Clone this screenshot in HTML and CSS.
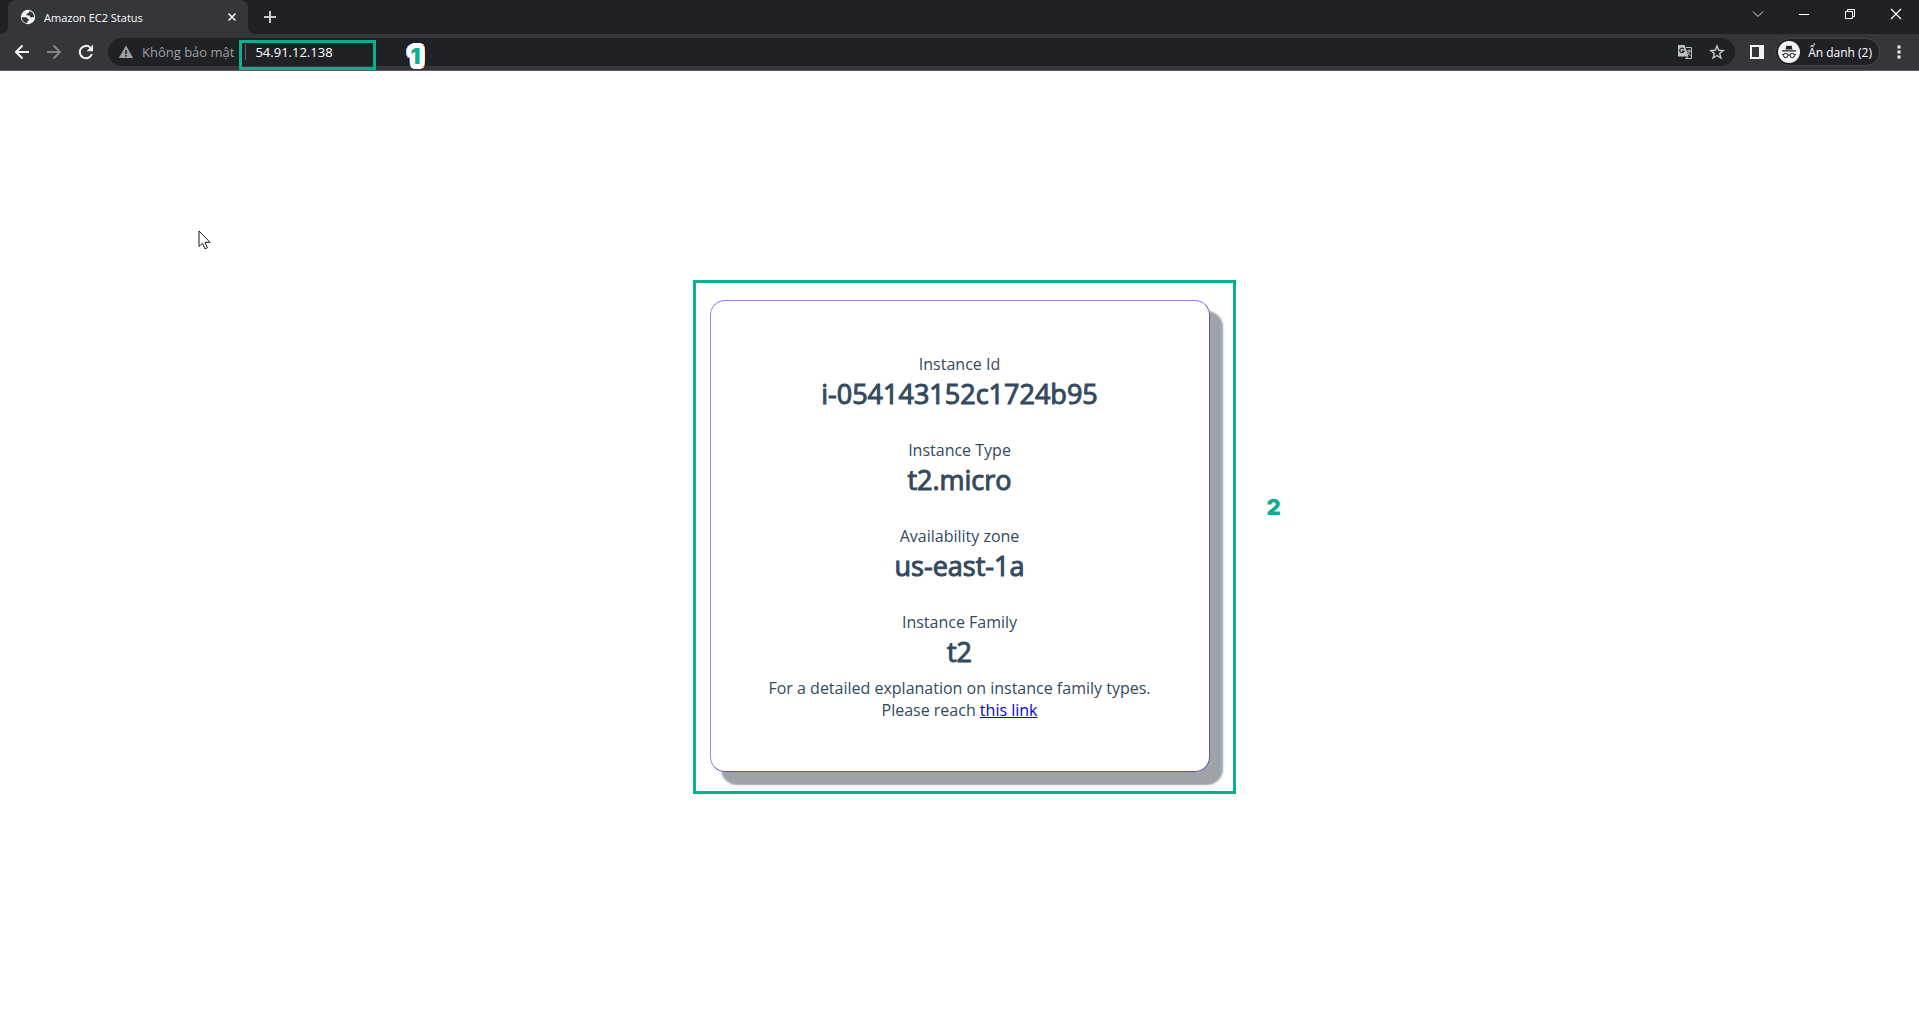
FILE: index.html
```html
<!DOCTYPE html>
<html lang="vi">
<head>
<meta charset="utf-8">
<title>Amazon EC2 Status</title>
<link rel="stylesheet" href="styles.css">
</head>
<body>
<header class="browser">
  <div class="tabstrip">
    <div class="tab">
      <svg class="favicon" width="16" height="16" viewBox="0 0 16 16"><circle cx="8" cy="8" r="7.2" fill="#f1f3f4"/><path d="M1.6 8.2h4.2c1.5 0 1.6 2 3 2v1.5c-1.300 0-1.500.6-1.500 2.300C4.500 14 2 12 1.600 8.200zM9 2.200c.2 1.700-.6 2-1.800 2.200-.7.2-.4 1.700-1.300 1.900 2.300.1 4.200-.2 4.200 1.500 0 1 1.400 1 2.100.2l1.900.3C14.200 4.700 12 2.500 9 2.200z" fill="#35363a"/></svg>
      <span class="tab-title">Amazon EC2 Status</span>
      <button class="plain close" aria-label="Đóng thẻ"><svg width="10" height="10" viewBox="0 0 10 10"><path d="M1.500 1.500l7 7m0-7l-7 7" stroke="#f1f3f4" stroke-width="1.600"/></svg></button>
    </div>
    <button class="plain new-tab" aria-label="Thẻ mới"><svg width="14" height="14" viewBox="0 0 14 14"><path d="M7 1v12M1 7h12" stroke="#c9cbce" stroke-width="2"/></svg></button>
    <div class="window-controls">
      <button class="plain" aria-label="Tìm kiếm thẻ"><svg width="12" height="12" viewBox="0 0 12 12"><path d="M1 3.500l5 5 5-5" fill="none" stroke="#dadce0"/></svg></button>
      <button class="plain" aria-label="Thu nhỏ"><svg width="12" height="12" viewBox="0 0 12 12"><path d="M1 6.500h10" stroke="#fff"/></svg></button>
      <button class="plain" aria-label="Khôi phục"><svg width="12" height="12" viewBox="0 0 12 12"><path d="M1.500 3.500h7v7h-7zM3.500 3.500v-2h7v7h-2" fill="none" stroke="#fff"/></svg></button>
      <button class="plain" aria-label="Đóng"><svg width="12" height="12" viewBox="0 0 12 12"><path d="M1 1l10 10m0-10L1 11" stroke="#fff" stroke-width="1.200"/></svg></button>
    </div>
  </div>
  <div class="toolbar">
    <nav class="nav-buttons">
      <button class="plain" aria-label="Quay lại"><svg width="16" height="16" viewBox="0 0 16 16"><path d="M15 8H2m6.500-6.500L2 8l6.500 6.500" fill="none" stroke="#f1f3f4" stroke-width="2"/></svg></button>
      <button class="plain" aria-label="Tiến"><svg width="16" height="16" viewBox="0 0 16 16"><path d="M1 8h13M7.500 1.500L14 8l-6.500 6.500" fill="none" stroke="#818387" stroke-width="2"/></svg></button>
      <button class="plain" aria-label="Tải lại"><svg width="16" height="16" viewBox="0 0 16 16"><path d="M13.900 10A6.200 6.200 0 1 1 12.300 3.600" fill="none" stroke="#f1f3f4" stroke-width="2"/><path d="M15 .8v6.400H8.600z" fill="#f1f3f4"/></svg></button>
    </nav>
    <div class="omnibox">
      <svg class="warning" width="16" height="16" viewBox="0 0 16 16"><path d="M8 1.500L15.200 14H.8z" fill="#9aa0a6"/><path d="M8 6v4M8 11v1.500" stroke="#202124" stroke-width="1.600"/></svg>
      <span class="security">Không bảo mật</span>
      <div class="address">
        <input class="url" type="text" value="54.91.12.138" aria-label="Địa chỉ">
        <span class="url-mark"></span>
        <span class="step step-one">1</span>
      </div>
      <button class="plain" aria-label="Dịch trang"><svg width="16" height="16" viewBox="0 0 16 16"><path d="M1 1h6.500l4 11.500H1z" fill="#bdc1c6"/><path d="M9 3.500h5.500v11H8.500l2.500-2" fill="none" stroke="#bdc1c6"/><path d="M6.800 5.200A2.200 2.200 0 1 0 7 7.200H5" fill="none" stroke="#202124" stroke-width="1.200"/><path d="M9.500 7h4.500M12.700 7c-.3 2-1.200 3.200-2.500 4M10.500 8c.6 1.600 1.600 2.600 3 3.500M12 5.500V7" fill="none" stroke="#bdc1c6"/></svg></button>
      <button class="plain" aria-label="Đánh dấu trang"><svg width="16" height="16" viewBox="0 0 16 16"><path d="M8 2l1.700 4.300 4.500.3-3.500 2.900 1.200 4.500L8 11.500 4.100 14l1.200-4.500-3.500-2.900 4.500-.3z" fill="none" stroke="#c4c7ca" stroke-width="1.400"/></svg></button>
    </div>
    <button class="plain panel" aria-label="Bảng điều khiển bên"><svg width="14" height="14" viewBox="0 0 14 14"><path d="M0 0h14v14H0zM2 2v10h7V2z" fill="#f1f3f4" fill-rule="evenodd"/></svg></button>
    <button class="plain profile">
      <svg width="22" height="22" viewBox="0 0 22 22"><circle cx="11" cy="11" r="11" fill="#f1f3f4"/><path d="M7.500 8.500l1-4 2.500.5 2.500-.5 1 4zM4 9.200h14v1.300H4z" fill="#202124"/><circle cx="7.700" cy="14.500" r="2.200" fill="none" stroke="#202124"/><circle cx="14.300" cy="14.500" r="2.200" fill="none" stroke="#202124"/><path d="M4 13.500h2M9.500 14h3M16 13.500h2" stroke="#202124"/></svg>
      <span>Ẩn danh (2)</span>
    </button>
    <button class="plain menu" aria-label="Trình đơn"><svg width="4" height="14" viewBox="0 0 4 14"><path d="M.5 .5h3v3h-3zM.5 5.500h3v3h-3zM.5 10.500h3v3h-3z" fill="#f1f3f4"/></svg></button>
  </div>
</header>
<main class="page">
  <section class="card">
    <dl class="facts">
      <div class="fact"><dt>Instance Id</dt><dd>i-054143152c1724b95</dd></div>
      <div class="fact"><dt>Instance Type</dt><dd>t2.micro</dd></div>
      <div class="fact"><dt>Availability zone</dt><dd>us-east-1a</dd></div>
      <div class="fact"><dt>Instance Family</dt><dd>t2</dd></div>
    </dl>
    <p class="note">For a detailed explanation on instance family types.<br>Please reach <a href="#">this link</a></p>
    <span class="card-mark"></span>
    <span class="step step-two">2</span>
  </section>
  <svg class="cursor" width="13" height="20" viewBox="0 0 13 20"><path d="M1 1v15.500l3.500-3.300 2.400 5.600 2.500-1.100L7 12.300h5z" fill="#fff" stroke="#15151f"/></svg>
</main>
</body>
</html>
```
FILE: styles.css
```css
* { box-sizing: border-box; }
body {
  margin: 0;
  min-height: 100vh;
  display: flex;
  flex-direction: column;
  background: #fff;
  font-family: "Open Sans", "Noto Sans", sans-serif;
}
.plain {
  display: inline-flex;
  align-items: center;
  justify-content: center;
  flex: none;
  padding: 0;
  border: 0;
  background: none;
  color: inherit;
  font: inherit;
}
svg { display: block; flex: none; }

/* Browser window frame */
.browser { color: #fff; font-size: 12px; }
.tabstrip {
  display: flex;
  height: 34px;
  padding-left: 8px;
  background: #202124;
}
.tab {
  position: relative;
  display: flex;
  align-items: center;
  width: 240px;
  padding: 0 11px 0 12px;
  border-radius: 8px 8px 0 0;
  background: #35363a;
}
.tab::before, .tab::after {
  content: "";
  position: absolute;
  bottom: 0;
  width: 8px;
  height: 8px;
}
.tab::before {
  left: -8px;
  background: radial-gradient(circle at 0 0, transparent 8px, #35363a 8px);
}
.tab::after {
  right: -8px;
  background: radial-gradient(circle at 100% 0, transparent 8px, #35363a 8px);
}
.tab-title { flex: 1; margin-left: 8px; font-size: 11px; }
.new-tab { margin-left: 15px; }
.window-controls { display: flex; align-items: flex-start; margin-left: auto; }
.window-controls .plain { width: 46px; height: 28px; }
.toolbar {
  display: flex;
  align-items: center;
  height: 37px;
  padding: 0 18px 0 14px;
  border-bottom: 1px solid #5f5a62;
  background: #35363a;
}
.nav-buttons { display: flex; gap: 16px; margin-right: 14px; }
.omnibox {
  display: flex;
  flex: 1;
  align-items: center;
  gap: 16px;
  height: 28px;
  padding: 0 10px;
  border-radius: 14px;
  background: #202124;
}
.security { margin-left: -8px; color: #9aa0a6; font-size: 13px; }
.address {
  position: relative;
  flex: 1;
  margin-left: -5px;
  border-left: 1px solid #5f6368;
}
.url {
  display: block;
  width: 100%;
  height: 16px;
  padding: 0 0 0 9px;
  border: 0;
  outline: 0;
  background: none;
  color: #fff;
  font: 13px/16px "Open Sans", "Noto Sans", sans-serif;
}
.panel { margin-left: 15px; }
.profile {
  justify-content: flex-start;
  gap: 8px;
  height: 28px;
  margin-left: 11px;
  padding: 0 7px 0 2px;
  border: 1px solid #43444a;
  border-radius: 14px;
  background: #202124;
}
.menu { margin-left: 17px; }

/* Instance status page */
.page {
  position: relative;
  flex: 1;
  display: flex;
  align-items: center;
  justify-content: center;
  padding-bottom: 30px;
}
.card {
  position: relative;
  width: 500px;
  padding: 52px 20px 50px;
  border: 1px solid;
  border-color: #9783f2 #6552b0 #6552b0 #9783f2;
  border-radius: 15px;
  box-shadow: 12px 12px 2px 1px #9ea3a9;
  background: #fff;
  color: #34495e;
  font-size: 16px;
  line-height: 22px;
  text-align: center;
}
.facts { display: grid; gap: 26px; margin: 0; }
.facts dd {
  margin: 0;
  font-size: 27px;
  line-height: 38px;
  -webkit-text-stroke: 1px #34495e;
}
.note { margin: 6px 0 0; }
.note a { color: #0000ee; }

/* Callouts */
.url-mark, .card-mark {
  position: absolute;
  border: 3px solid #08b08f;
  pointer-events: none;
}
.url-mark { top: -4px; left: -7px; width: 137px; height: 30px; }
.card-mark { inset: -21px -27px -23px -18px; }
.step {
  position: absolute;
  color: #08b08f;
  font: 900 22px/28px Inter, sans-serif;
}
.step-one {
  top: -2px;
  left: 164px;
  text-shadow:
    5px 0 #fff, -5px 0 #fff, 0 5px #fff, 0 -5px #fff,
    4px 4px #fff, -4px 4px #fff, 4px -4px #fff, -4px -4px #fff,
    2px 5px #fff, -2px 5px #fff, 2px -5px #fff, -2px -5px #fff,
    5px 2px #fff, -5px 2px #fff, 5px -2px #fff, -5px -2px #fff;
}
.step-two { top: 192px; left: 556px; }
.cursor { position: absolute; top: 159px; left: 198px; }
```
